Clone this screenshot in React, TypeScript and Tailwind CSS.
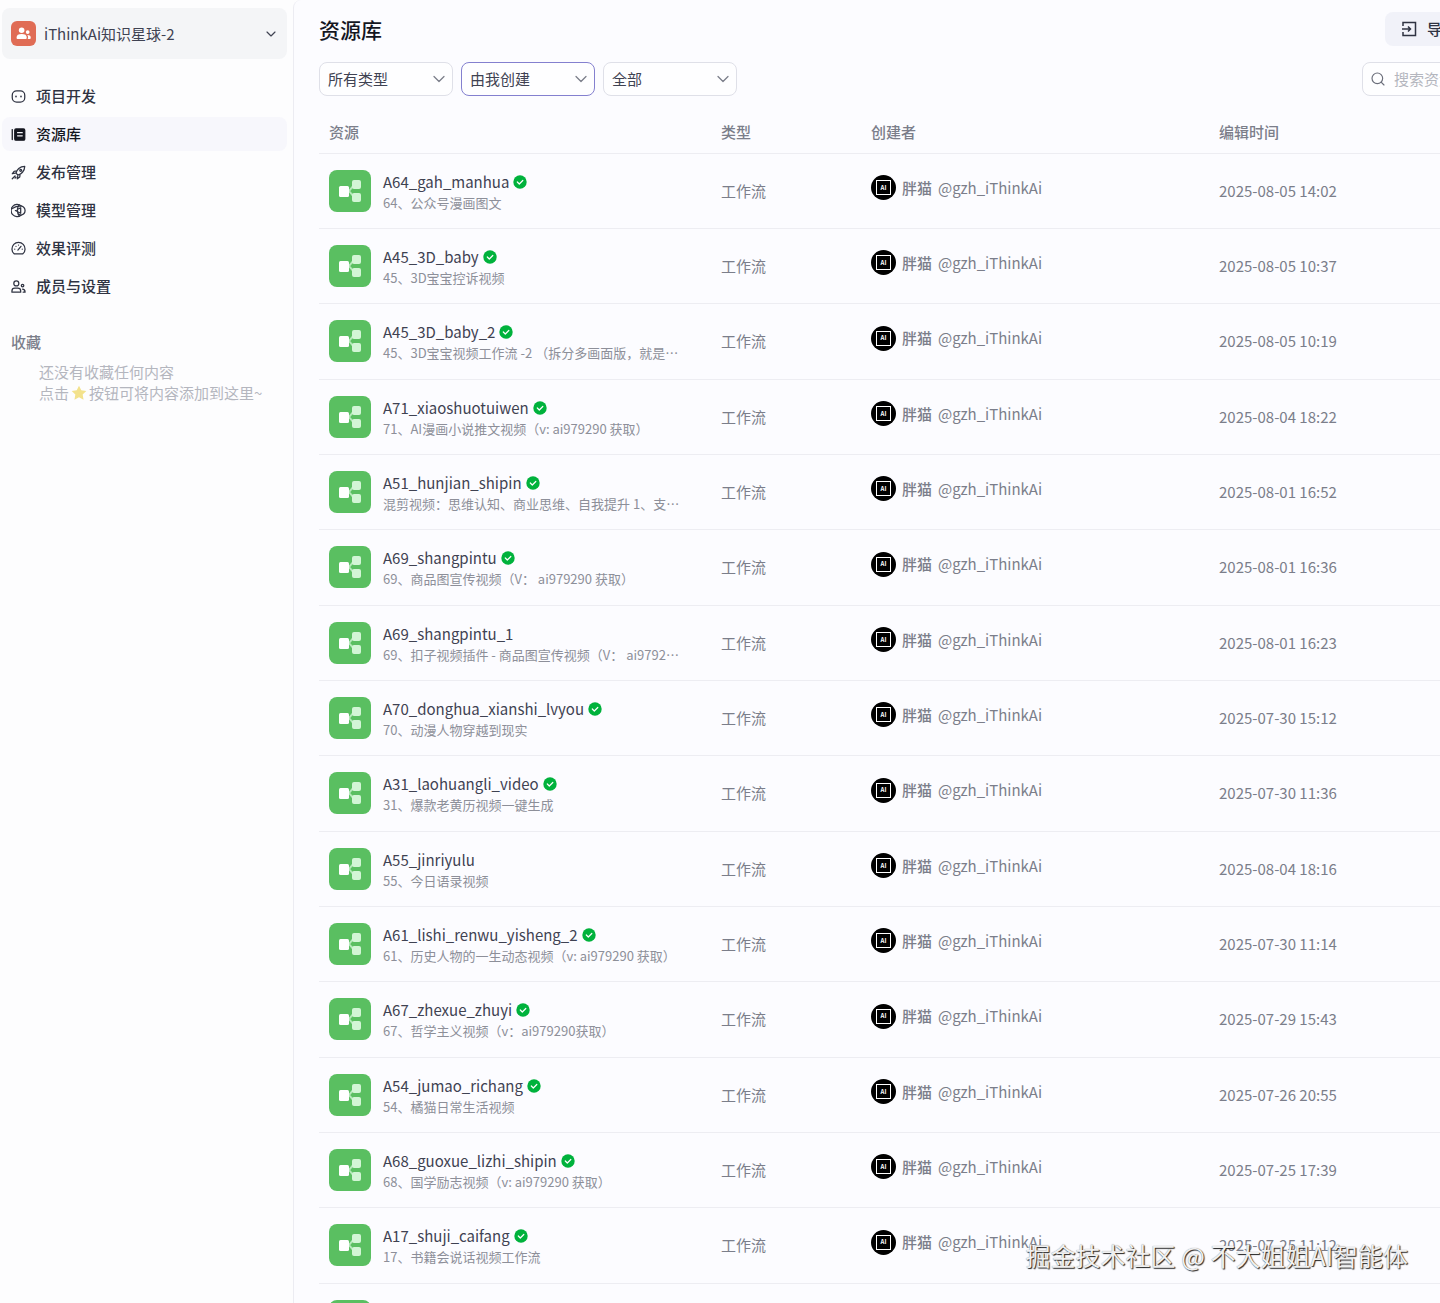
import type { ReactNode } from 'react';
import { ChevronDown, Search } from 'lucide-react';
import clsx from 'clsx';

interface Resource {
  name: string;
  description: string;
  editedAt: string;
  published?: boolean;
}

interface NavItem {
  label: string;
  icon: ReactNode;
  active?: boolean;
}

const RESOURCES: Resource[] = [
  { name: 'A64_gah_manhua', description: '64、公众号漫画图文', editedAt: '2025-08-05 14:02', published: true },
  { name: 'A45_3D_baby', description: '45、3D宝宝控诉视频', editedAt: '2025-08-05 10:37', published: true },
  { name: 'A45_3D_baby_2', description: '45、3D宝宝视频工作流 -2 （拆分多画面版，就是…', editedAt: '2025-08-05 10:19', published: true },
  { name: 'A71_xiaoshuotuiwen', description: '71、AI漫画小说推文视频（v: ai979290 获取）', editedAt: '2025-08-04 18:22', published: true },
  { name: 'A51_hunjian_shipin', description: '混剪视频：思维认知、商业思维、自我提升 1、支…', editedAt: '2025-08-01 16:52', published: true },
  { name: 'A69_shangpintu', description: '69、商品图宣传视频（V： ai979290 获取）', editedAt: '2025-08-01 16:36', published: true },
  { name: 'A69_shangpintu_1', description: '69、扣子视频插件 - 商品图宣传视频（V： ai9792…', editedAt: '2025-08-01 16:23' },
  { name: 'A70_donghua_xianshi_lvyou', description: '70、动漫人物穿越到现实', editedAt: '2025-07-30 15:12', published: true },
  { name: 'A31_laohuangli_video', description: '31、爆款老黄历视频一键生成', editedAt: '2025-07-30 11:36', published: true },
  { name: 'A55_jinriyulu', description: '55、今日语录视频', editedAt: '2025-08-04 18:16' },
  { name: 'A61_lishi_renwu_yisheng_2', description: '61、历史人物的一生动态视频（v: ai979290 获取）', editedAt: '2025-07-30 11:14', published: true },
  { name: 'A67_zhexue_zhuyi', description: '67、哲学主义视频（v：ai979290获取）', editedAt: '2025-07-29 15:43', published: true },
  { name: 'A54_jumao_richang', description: '54、橘猫日常生活视频', editedAt: '2025-07-26 20:55', published: true },
  { name: 'A68_guoxue_lizhi_shipin', description: '68、国学励志视频（v: ai979290 获取）', editedAt: '2025-07-25 17:39', published: true },
  { name: 'A17_shuji_caifang', description: '17、书籍会说话视频工作流', editedAt: '2025-07-25 11:12', published: true },
];

function LineIcon({ children }: { children: ReactNode }) {
  return (
    <svg
      viewBox="0 0 24 24"
      className="size-[15px] shrink-0"
      fill="none"
      stroke="currentColor"
      strokeWidth="2"
      strokeLinecap="round"
      strokeLinejoin="round"
      aria-hidden
    >
      {children}
    </svg>
  );
}

const NAV_ITEMS: NavItem[] = [
  {
    label: '项目开发',
    icon: (
      <LineIcon>
        <rect x="2" y="3" width="20" height="18" rx="7" />
        <path d="M8 11.500v1M16 11.500v1" strokeWidth="2.500" />
      </LineIcon>
    ),
  },
  {
    label: '资源库',
    active: true,
    icon: (
      <LineIcon>
        <path d="M2 4v16" />
        <rect x="6" y="3" width="16" height="18" rx="2" fill="currentColor" />
        <path d="M10.500 9h7.500M10.500 14h7.500" stroke="#f7f7fc" />
      </LineIcon>
    ),
  },
  {
    label: '发布管理',
    icon: (
      <LineIcon>
        <path d="M8 13C9 8 14 2 22 2c0 8-6 13-11 14zM9 9.500 5 10l-3 4 5-1M14.500 15 14 19l-4 3 1-5" />
        <circle cx="15.500" cy="8.500" r="1.500" />
        <path d="M6.500 17.500 2 22M6.500 21 8 19.500" />
      </LineIcon>
    ),
  },
  {
    label: '模型管理',
    icon: (
      <LineIcon>
        <path d="M16 4.500A9.700 9.700 0 1 0 16 19.500" />
        <path d="M2 9C7 5 11 4.500 16 4.500c4 1 6.500 4 6.500 7.500s-2.500 6.500-6.500 7.500c-2-.5-3.500-1-4.500-2" />
        <path d="M13 3c-3.500 5-3.500 12 0 17.500M7 12l8.500-4.500v9z" />
      </LineIcon>
    ),
  },
  {
    label: '效果评测',
    icon: (
      <LineIcon>
        <path d="M5 20.500a10.500 10.500 0 1 1 14 0z" />
        <path d="m11 14.500 5-6M6 13h.010M8 8.500h.010M12 6.500h.010M18 13h.010" />
      </LineIcon>
    ),
  },
  {
    label: '成员与设置',
    icon: (
      <LineIcon>
        <circle cx="8.500" cy="7" r="4" />
        <path d="M1.500 21v-2c0-3 2-4.500 4.500-4.500h5c2.500 0 4.500 1.500 4.500 4.500v2z" />
        <circle cx="18.500" cy="10.500" r="2" />
        <path d="M18.500 16c3 0 4 1.500 4 5h-3" />
      </LineIcon>
    ),
  },
];

const FILTERS = [
  { id: 'type', label: '资源类型', value: '所有类型' },
  { id: 'creator', label: '创建者', value: '由我创建', active: true },
  { id: 'status', label: '状态', value: '全部' },
];

function TeamIcon() {
  return (
    <span className="flex size-[25px] shrink-0 items-center justify-center rounded-md bg-[#e06c55]">
      <svg viewBox="0 0 16 14" className="h-[13px] w-[15px]" fill="#fff" aria-hidden>
        <circle cx="6" cy="3.500" r="3" />
        <path d="M.5 11.500C.5 8.500 2.500 7.500 6 7.500s5.500 1 5.500 4c0 1-.5 1.500-1.500 1.500H2c-1 0-1.500-.5-1.500-1.500z" />
        <circle cx="12.500" cy="5.500" r="2" />
        <path d="M12 8.500c3 0 3.800 1 3.800 3 0 1-.5 1.500-1.300 1.500h-2c.8-1.500.5-3.500-.5-4.500z" />
      </svg>
    </span>
  );
}

function WorkflowIcon() {
  return (
    <svg viewBox="0 0 42 42" className="size-[42px] shrink-0" aria-hidden>
      <rect width="42" height="42" rx="8" fill="#5abf61" />
      <path d="M19 21c4-1 3-5 7-6M19 21c4 1 3 5 7 6" fill="none" stroke="#b4e9b9" strokeWidth="2" />
      <rect x="10" y="16" width="10" height="11" rx="1.500" fill="#fff" />
      <rect x="23" y="10" width="9" height="9" rx="2" fill="#d2f5d5" />
      <rect x="23" y="23" width="9" height="9" rx="2" fill="#d2f5d5" />
    </svg>
  );
}

function PublishedBadge() {
  return (
    <svg viewBox="0 0 14 14" className="size-[14px] shrink-0" role="img" aria-label="已发布">
      <circle cx="7" cy="7" r="6.700" fill="#00b23c" />
      <path d="m4.300 7 2 2 3.500-3.500" fill="none" stroke="#fff" strokeWidth="1.200" strokeLinecap="round" strokeLinejoin="round" />
    </svg>
  );
}

function Avatar() {
  return (
    <span className="flex size-[25px] shrink-0 items-center justify-center rounded-full bg-black">
      <span className="flex size-[15px] items-center justify-center border border-white text-[6px] leading-none font-bold text-white">
        AI
      </span>
    </span>
  );
}

function Sidebar() {
  return (
    <aside className="w-[293px] shrink-0 pt-2 pr-1.5 pl-0.5">
      <button
        type="button"
        className="flex h-[51px] w-full items-center gap-2 rounded-lg bg-[#f4f5f7] pr-2 pl-[9px] text-left text-[#3f4252]"
      >
        <TeamIcon />
        <span className="flex-1">iThinkAi知识星球-2</span>
        <ChevronDown className="size-4" strokeWidth={1.75} aria-hidden />
      </button>

      <nav className="mt-5 flex flex-col gap-1">
        {NAV_ITEMS.map((item) => (
          <a
            key={item.label}
            href="#"
            aria-current={item.active ? 'page' : undefined}
            className={clsx(
              'flex h-[34px] items-center gap-2.5 rounded-lg pl-[9px] font-medium',
              item.active ? 'bg-[#f7f7fc] text-[#14161f]' : 'text-[#2f3342]',
            )}
          >
            {item.icon}
            {item.label}
          </a>
        ))}
      </nav>

      <section className="mt-7 pl-[9px]">
        <h2 className="font-medium text-[#7b7e8a]">收藏</h2>
        <p className="mt-2 pl-7 leading-[21px] text-[#b4b6be]">
          还没有收藏任何内容
          <br />
          点击
          <svg viewBox="0 0 24 24" className="mx-0.5 inline size-4 align-[-2px]" fill="#f3e28c" aria-hidden>
            <path d="m12 1 3.400 7 7.600 1-5.500 5.400L18.800 22 12 18.400 5.200 22l1.300-7.600L1 9l7.600-1z" />
          </svg>
          按钮可将内容添加到这里~
        </p>
      </section>
    </aside>
  );
}

function FilterSelect({ id, label, value, active }: { id: string; label: string; value: string; active?: boolean }) {
  return (
    <div className="relative">
      <select
        id={id}
        aria-label={label}
        className={clsx(
          'block h-[34px] w-[134px] appearance-none rounded-lg border bg-white/50 pl-2 text-[#3f4252] outline-none',
          active ? 'border-[#8480cf]' : 'border-[#dfe0e8]',
        )}
      >
        <option>{value}</option>
      </select>
      <ChevronDown
        className="pointer-events-none absolute inset-y-0 right-1 my-auto size-5 text-[#7b7e8a]"
        strokeWidth={1.5}
        aria-hidden
      />
    </div>
  );
}

function ResourceRow({ name, description, editedAt, published }: Resource) {
  return (
    <tr className="h-[75px] border-b border-[#ededf2] nth-[3n]:h-[76px]">
      <td className="px-2.5">
        <div className="flex items-center gap-3">
          <WorkflowIcon />
          <div className="pt-0.5">
            <div className="flex h-[22px] items-center gap-1 text-[#3f4252]">
              {name}
              {published && <PublishedBadge />}
            </div>
            <p className="h-5 text-[13px] leading-5 whitespace-nowrap text-[#8d8f99]">{description}</p>
          </div>
        </div>
      </td>
      <td className="px-2.5">工作流</td>
      <td className="px-2.5 pb-1.5">
        <div className="flex items-center gap-1.5">
          <Avatar />
          <span className="font-medium">胖猫</span>
          <span>@gzh_iThinkAi</span>
        </div>
      </td>
      <td className="px-2.5">{editedAt}</td>
    </tr>
  );
}

export default function App() {
  return (
    <div
      lang="zh-CN"
      className="relative flex h-screen overflow-hidden bg-[#fdfdfe] font-['Noto_Sans_CJK_SC',sans-serif] text-[15px] leading-[22px]"
    >
      <Sidebar />

      <main className="min-w-0 flex-1 overflow-hidden rounded-tl-lg border-l border-[#ececf2] bg-[#fcfcff] pt-3 pl-[25px]">
        <div className="min-w-[1253px]">
          <header className="flex h-[34px] items-center justify-between">
            <h1 className="text-[21px] font-medium text-[#14161f]">资源库</h1>
            <button
              type="button"
              className="flex h-[34px] w-[187px] items-center gap-2.5 rounded-lg bg-[#f1f2f9] pl-4 font-medium text-[#2f3342]"
            >
              <svg viewBox="0 0 16 16" className="size-4" fill="none" stroke="currentColor" strokeWidth="1.500" aria-hidden>
                <path d="M2 5V1.500h12.500v13H2V11M1 8h8M7 5.500 9.500 8 7 10.500" />
              </svg>
              导入
            </button>
          </header>

          <div className="mt-4 flex items-center gap-2">
            {FILTERS.map((filter) => (
              <FilterSelect key={filter.id} {...filter} />
            ))}
            <label className="ml-auto flex h-[34px] w-[210px] items-center gap-2 rounded-lg border border-[#dfe0e8] bg-white/50 pl-[7px]">
              <Search className="size-4 text-[#6b6e7a]" strokeWidth={1.75} aria-hidden />
              <input
                type="search"
                aria-label="搜索资源"
                placeholder="搜索资源"
                className="min-w-0 flex-1 bg-transparent outline-none placeholder:text-[#b4b6be]"
              />
            </label>
          </div>

          <table className="mt-4 w-full table-fixed border-collapse text-left text-[#7b7e8a]">
            <colgroup>
              <col className="w-[392px]" />
              <col className="w-[150px]" />
              <col className="w-[348px]" />
              <col />
            </colgroup>
            <thead>
              <tr className="h-[41px] border-b border-[#ededf2]">
                <th className="px-2.5 font-medium">资源</th>
                <th className="px-2.5 font-medium">类型</th>
                <th className="px-2.5 font-medium">创建者</th>
                <th className="px-2.5 font-medium">编辑时间</th>
              </tr>
            </thead>
            <tbody>
              {RESOURCES.map((resource) => (
                <ResourceRow key={resource.name} {...resource} />
              ))}
              <tr className="h-[75px]">
                <td className="px-2.5" colSpan={4}>
                  <WorkflowIcon />
                </td>
              </tr>
            </tbody>
          </table>
        </div>
      </main>

      <p className="pointer-events-none absolute right-8 bottom-[30px] text-[25px] leading-9 text-[#f0f0f0] [text-shadow:1px_1px_1px_#222,0_0_1px_#888]">
        掘金技术社区 @ 不大姐姐AI智能体
      </p>
    </div>
  );
}
